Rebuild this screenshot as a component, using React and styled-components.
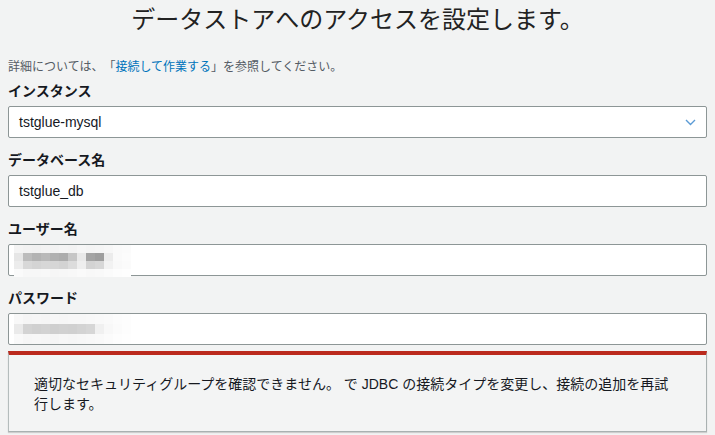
import React from 'react';
import styled, { createGlobalStyle } from 'styled-components';

const GlobalStyle = createGlobalStyle`
  html, body {
    margin: 0;
    padding: 0;
    background: #f2f3f3;
  }
  body {
    font-family: "Liberation Sans", "Noto Sans CJK JP", sans-serif;
    color: #16191f;
    text-spacing-trim: space-all;
  }
`;

const Page = styled.div`
  width: 715px;
  height: 435px;
  box-sizing: border-box;
  padding: 0 8px;
  overflow: hidden;
`;

const Title = styled.h1`
  margin: 4px 0 0;
  font-size: 24px;
  line-height: 32px;
  font-weight: 400;
  color: #222;
  text-align: center;
`;

const Info = styled.p`
  margin: 23px 0 0;
  font-size: 12px;
  line-height: 16px;
  color: #545b64;
`;

const Link = styled.a`
  color: #0073bb;
  text-decoration: none;
`;

const Field = styled.div`
  display: flex;
  flex-direction: column;
  gap: 5px;
  margin-top: ${(p) => (p.$first ? '6px' : '12px')};
`;

const Label = styled.label`
  font-size: 14px;
  line-height: 20px;
  font-weight: 700;
  color: #16191f;
`;

const Box = styled.div`
  height: 32px;
  box-sizing: border-box;
  border: 1px solid #8d9696;
  border-radius: 2px;
  background: #fff;
  display: flex;
  align-items: center;
  justify-content: space-between;
  padding: 0 10px;
  font-size: 14px;
  color: #16191f;
  position: relative;
`;

const Chevron = styled.svg`
  width: 11px;
  height: 7px;
`;

// pixelated redaction over the masked values
const Mosaic = styled.div`
  position: absolute;
  left: 5px;
  top: 0;
  display: grid;
  grid-template-columns: repeat(13, 9px);
  grid-auto-rows: ${(p) => p.$row}px;
`;

const Cell = styled.div`
  background: ${(p) => p.$c};
`;

const userCells = [
  ['#f4f4f4', '#f2f2f2', '#f1f1f1', '#f3f3f3', '#f2f2f2', '#f4f4f4', '#f3f3f3', '#f6f6f6', '#f4f4f4', '#f5f5f5', '#f7f7f7', '#fafafa', '#fbfbfb'],
  ['#e6e6e6', '#bcbcbc', '#b3b3b3', '#b9b9b9', '#b0b0b0', '#acacac', '#c6c6c6', '#e9e9e9', '#a4a4a4', '#9e9e9e', '#ececec', '#fafafa', '#fcfcfc'],
  ['#ececec', '#d8d8d8', '#d4d4d4', '#d7d7d7', '#d6d6d6', '#d3d3d3', '#dcdcdc', '#eeeeee', '#d3d3d3', '#d7d7d7', '#f2f2f2', '#f9f9f9', '#fbfbfb'],
  ['#fafafa', '#f7f7f7', '#f7f7f7', '#f8f8f8', '#f6f6f6', '#f7f7f7', '#f8f8f8', '#fafafa', '#f8f8f8', '#f9f9f9', '#fbfbfb', '#fdfdfd', '#fefefe'],
];

const passCells = [
  ['#f8f8f8', '#f5f5f5', '#f6f6f6', '#f5f5f5', '#f7f7f7', '#f6f6f6', '#f7f7f7', '#f7f7f7', '#f8f8f8', '#f9f9f9', '#fafafa', '#fcfcfc', '#fdfdfd'],
  ['#eaeaea', '#d3d3d3', '#d0d0d0', '#d2d2d2', '#cfcfcf', '#d1d1d1', '#d0d0d0', '#d3d3d3', '#d6d6d6', '#f0f0f0', '#f8f8f8', '#fbfbfb', '#fdfdfd'],
  ['#f9f9f9', '#f6f6f6', '#f7f7f7', '#f6f6f6', '#f5f5f5', '#f7f7f7', '#f6f6f6', '#f7f7f7', '#f8f8f8', '#f9f9f9', '#fbfbfb', '#fdfdfd', '#fefefe'],
];

const Redacted = ({ cells, row }) => (
  <Mosaic $row={row}>
    {cells.flat().map((c, i) => (
      <Cell key={i} $c={c} />
    ))}
  </Mosaic>
);

const Alert = styled.div`
  margin-top: 6px;
  border-top: 4px solid #bb2a1d;
  border-left: 1px solid #b4bcbc;
  border-right: 1px solid #a9b1b1;
  border-bottom: 1px solid #a9b1b1;
  box-shadow: 0 1px 1px rgba(0, 0, 0, 0.15);
  background: #f3f4f4;
  padding: 19px 36px 17px 25px;
  font-size: 14px;
  line-height: 20px;
  color: #16191f;
`;

const App = () => (
  <Page>
    <GlobalStyle />
    <Title>データストアへのアクセスを設定します。</Title>
    <Info>
      詳細については、「<Link href="#">接続して作業する</Link>」を参照してください。
    </Info>

    <Field $first>
      <Label>インスタンス</Label>
      <Box>
        <span>tstglue-mysql</span>
        <Chevron viewBox="0 0 11 7">
          <polyline points="1,1 5.5,5.5 10,1" fill="none" stroke="#5b9bd5" strokeWidth="1.4" />
        </Chevron>
      </Box>
    </Field>

    <Field>
      <Label>データベース名</Label>
      <Box>
        <span>tstglue_db</span>
      </Box>
    </Field>

    <Field>
      <Label>ユーザー名</Label>
      <Box>
        <Redacted cells={userCells} row={8} />
      </Box>
    </Field>

    <Field>
      <Label>パスワード</Label>
      <Box>
        <Redacted cells={passCells} row={10} />
      </Box>
    </Field>

    <Alert>
      適切なセキュリティグループを確認できません。 で JDBC の接続タイプを変更し、接続の追加を再試行します。
    </Alert>
  </Page>
);

export default App;
